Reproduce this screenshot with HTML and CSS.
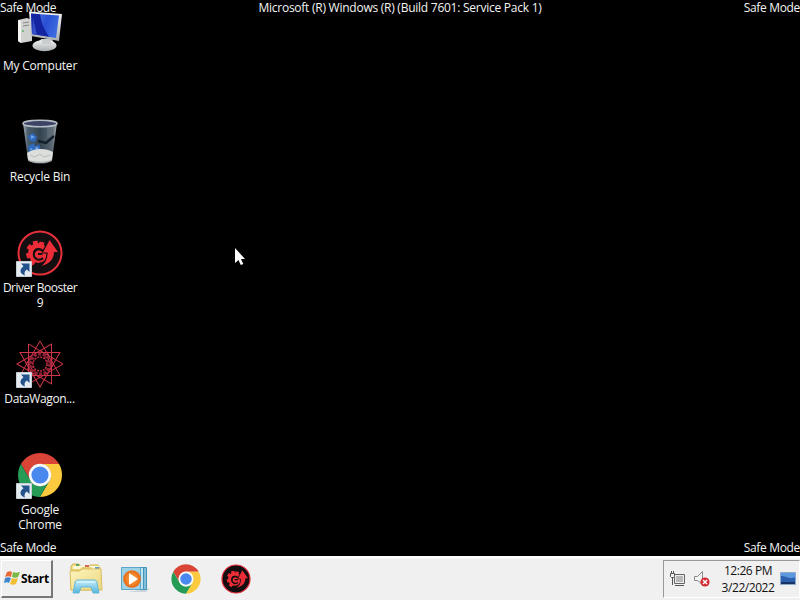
FILE: index.html
```html
<!DOCTYPE html>
<html lang="en">
<head>
<meta charset="utf-8">
<title>Desktop</title>
<link rel="stylesheet" href="styles.css">
</head>
<body>
<svg class="defs" width="0" height="0" aria-hidden="true">
  <defs>
    <linearGradient id="screen" x1="0" y1="0" x2="1" y2=".3"><stop offset="0" stop-color="#5f86ec"/><stop offset=".35" stop-color="#3c62dc"/><stop offset=".6" stop-color="#2a50d4"/><stop offset="1" stop-color="#3b6ae0"/></linearGradient>
    <linearGradient id="metal" x1="0" y1="0" x2="0" y2="1"><stop offset="0" stop-color="#f4f4f4"/><stop offset="1" stop-color="#a9aeb0"/></linearGradient>
    <linearGradient id="glass" x1="0" y1="0" x2="1" y2="0"><stop offset="0" stop-color="#a4b0b8"/><stop offset=".14" stop-color="#4b5c6b"/><stop offset=".5" stop-color="#33434f"/><stop offset=".86" stop-color="#5a6873"/><stop offset="1" stop-color="#a4adb3"/></linearGradient>
    <linearGradient id="folder" x1="0" y1="0" x2="1" y2="1"><stop offset="0" stop-color="#fdf5bf"/><stop offset="1" stop-color="#ecd57c"/></linearGradient>
    <linearGradient id="sky" x1="0" y1="0" x2="0" y2="1"><stop offset="0" stop-color="#c9effa"/><stop offset="1" stop-color="#54b5dd"/></linearGradient>
    <radialGradient id="orange"><stop offset="0" stop-color="#ffae4d"/><stop offset="1" stop-color="#e76813"/></radialGradient>
    <symbol id="chrome" viewBox="0 0 48 48">
      <path fill="#d94437" d="M4.950 13A22 22 0 0 1 43.050 13L24 13A11 11 0 0 0 14.470 29.500Z"/>
      <path fill="#fbca3e" transform="rotate(120 24 24)" d="M4.950 13A22 22 0 0 1 43.050 13L24 13A11 11 0 0 0 14.470 29.500Z"/>
      <path fill="#269b55" transform="rotate(240 24 24)" d="M4.950 13A22 22 0 0 1 43.050 13L24 13A11 11 0 0 0 14.470 29.500Z"/>
      <circle cx="24" cy="24" r="11.200" fill="#fafafa"/><circle cx="24" cy="24" r="8.600" fill="#4888ef"/>
    </symbol>
    <symbol id="booster" viewBox="0 0 48 48">
      <circle cx="22" cy="24" r="7.500" fill="none" stroke="#ec2d38" stroke-width="5"/>
      <g stroke="#ec2d38" stroke-width="5"><path d="M20 17l-1-5"/><path d="M16 20l-4-3"/><path d="M14.500 26l-4 1"/><path d="M18 31l-3 4"/><path d="M25 17l1-4"/></g>
      <path fill="#ec2d38" stroke="#130e0f" stroke-width="1.200" d="M33.500 10L43 23.500h-4.500c0 7-5 12.500-15.500 14.500 5-3 8-7 8-14h-5z"/>
      <circle cx="22.500" cy="25" r="4" fill="#ec2d38"/>
      <path fill="none" stroke="#130e0f" stroke-width="2" d="M27 22a5.300 5.300 0 1 0 0 7M22 25h4"/>
    </symbol>
    <symbol id="shortcut" viewBox="0 0 16 16">
      <path fill="#e4ebf0" stroke="#c5ced4" d="M.5.5h15v15H.5z"/>
      <path fill="#24528c" d="M5 2.500h8.500V11l-2.700-2.500C8.500 10 8 12 9 14.500 3.500 13 3 8.500 7.500 5.300z"/>
    </symbol>
    <g id="rosette"><path d="M24 0L44 34.500H4Z"/><path d="M24 9c7 4 7 9 0 14s-7 10 0 14"/></g>
  </defs>
</svg>

<main class="desktop">
  <span class="mark top-left">Safe Mode</span>
  <span class="mark build">Microsoft (R) Windows (R) (Build 7601: Service Pack 1)</span>
  <span class="mark top-right">Safe Mode</span>
  <span class="mark bottom-left">Safe Mode</span>
  <span class="mark bottom-right">Safe Mode</span>

  <div class="icons">
    <div class="item">
      <svg width="48" height="48" viewBox="0 0 48 48">
        <path fill="#d0d2d0" d="M2 12l9-2 5 2v21L5 35l-3-2z"/><path fill="#f4f4f1" d="M2 12l3 1v22l-3-2z"/><path stroke="#888" d="M7 15l6-1M7 18l6-1"/><circle cx="7" cy="23" r="1" fill="#55b66f"/>
        <path fill="#bfc4c4" d="M25 31h11l3 7H22z"/><ellipse cx="28.500" cy="37.500" rx="12" ry="5.700" fill="url(#metal)"/><path fill="#c8cdcf" d="M26 31h8l1 5h-9z"/>
        <path fill="url(#metal)" d="M13 3.500l33 2.500-3 27-28-5z"/><path fill="url(#screen)" d="M15 5.500l28 2-3 22.500-24-4z"/><path fill="#1424a1" d="M15 5.500l9 .7c1 8 4 15 9 22.600L16 26z"/><path fill="#3350c8" d="M17 10l4 17-5-1z"/>
      </svg>
      <span class="label computer">My Computer</span>
    </div>
    <div class="item">
      <svg width="48" height="48" viewBox="0 0 48 48">
        <path fill="url(#glass)" d="M7 4h34l-5 37c-2 5-21 5-24 0z"/>
        <path fill="#64737e" d="M31 8h6l-2 10-4 2z" opacity=".5"/>
        <path fill="#2f69bd" d="M12 17l5-3 4 4-2 5-5-1zM12 27l6-3 1 4 4-3 2 6-4 4-8-2z"/><path fill="#70a5e8" d="M15 16l4 2-4 2zM20 27l3 3-4 2zM14 29l3 1-2 2z"/><path fill="none" stroke="#14202c" stroke-width="2.500" d="M22 22l8 2 8-7"/>
        <path fill="#dcdedb" d="M11 34c7-5 19-5 26-1l-1 8c-3 4-21 4-24 0z"/><path fill="none" stroke="#b8bcba" d="M14 36l5 2 5-3 4 3 6-2"/><path fill="none" stroke="#9fa4a5" d="M12 41c4 3 20 3 24 0"/>
        <ellipse cx="24" cy="4.500" rx="17" ry="3.300" fill="#3c4366" stroke="#b5bec4" stroke-width="1.500"/>
      </svg>
      <span class="label">Recycle Bin</span>
    </div>
    <div class="item">
      <svg width="48" height="48" viewBox="0 0 48 48"><circle cx="24" cy="23" r="21.500" fill="#130e0f" stroke="#e8303a" stroke-width="2"/><use href="#booster" x="0" y="-1" width="48" height="48"/><use href="#shortcut" x="0" y="31" width="16" height="16"/></svg>
      <span class="label booster">Driver Booster</span>
      <span class="label second">9</span>
    </div>
    <div class="item">
      <svg width="48" height="48" viewBox="0 0 48 48">
        <g fill="none" stroke="#d0354a" stroke-width="1">
          <use href="#rosette"/><use href="#rosette" transform="rotate(30 24 23)"/><use href="#rosette" transform="rotate(60 24 23)"/><use href="#rosette" transform="rotate(90 24 23)"/>
        </g>
        <circle cx="24" cy="23" r="10" fill="none" stroke="#8f2035" stroke-width="3" stroke-dasharray="3 1.500"/>
        <circle cx="24" cy="23" r="7" fill="#080304" stroke="#b92b3f" stroke-width="1.500" stroke-dasharray="2 1"/>
        <use href="#shortcut" x="0" y="31" width="16" height="16"/>
      </svg>
      <span class="label wagon">DataWagon...</span>
    </div>
    <div class="item">
      <svg width="48" height="48" viewBox="0 0 48 48"><use href="#chrome" x="0" y="-1" width="48" height="48"/><use href="#shortcut" x="0" y="31" width="16" height="16"/></svg>
      <span class="label">Google</span>
      <span class="label second">Chrome</span>
    </div>
  </div>

  <svg class="cursor" width="12" height="19" viewBox="0 0 12 19"><path fill="#fff" d="M1 1v15l3.500-3 2.300 5 2.500-1-2.300-5H11z"/></svg>
</main>

<footer class="taskbar">
  <div class="start">
    <svg width="17" height="16" viewBox="0 0 17 16"><path fill="#e76a32" d="M3 2c2-1 4-1 5 0L7 7C5 6 3 6 1 7z"/><path fill="#79b843" d="M9 2c2 1 4 1 7 0l-2 5c-2 1-4 1-6 0z"/><path fill="#4385ca" d="M1 8c2-1 4-1 6 0l-2 5c-1-1-3-1-5 0z"/><path fill="#f3bf35" d="M8 8c2 1 4 1 6 0l-2 6c-2 1-4 1-6 0z"/></svg>
    <span>Start</span>
  </div>
  <div class="pins">
    <svg width="36" height="34" viewBox="0 0 36 34">
      <path fill="#efdc83" stroke="#d0b650" d="M3 4l2-2h6l2 3h8l1-2h8l2 3v22H3z"/><path fill="#fff8d8" d="M5 4h26v5H5z"/><path fill="#e9ce70" d="M4 7h8l2-2h9l2 3h8v3H4z"/><path fill="#59a36a" d="M8 2h3v2H8z"/><path fill="#cf695d" d="M17 3h4v2h-4z"/><path fill="#639dc8" d="M27 5h4v2h-4z"/>
      <path fill="url(#folder)" stroke="#d9bf61" d="M2 9h10l2-2h19l1 21H3z"/><path fill="url(#sky)" stroke="#65b8d7" d="M7 21c0-2 1-3 3-3h16c2 0 3 1 3 3l2 10h-6l-2-6H13l-2 6H5z"/><path stroke="#e6fbff" d="M9 20h18"/>
    </svg>
    <svg width="30" height="28" viewBox="0 0 30 28"><path fill="#b9c9cf" d="M20 25l9-2-4 4H6z" opacity=".7"/><path fill="#83bfd9" stroke="#4592b8" d="M8 2.500h17.500v22H8z"/><path fill="#c1e5f2" stroke="#4592b8" d="M5 2.500h17.500v22H5z"/><path fill="#9ed2e7" stroke="#5aa7cb" d="M.5 2.500h19v22H.5z"/><circle cx="11" cy="14" r="8.800" fill="url(#orange)"/><path fill="#fff" d="M8 8l9 6-9 6z"/></svg>
    <svg width="32" height="32" viewBox="0 0 48 48"><use href="#chrome" width="48" height="48"/></svg>
    <svg width="32" height="32" viewBox="0 0 48 48"><circle cx="24" cy="24" r="21" fill="#130e0f" stroke="#e82c3a" stroke-width="1.800"/><use href="#booster" width="48" height="48"/></svg>
  </div>
  <div class="tray">
    <svg width="18" height="18" viewBox="0 0 18 18"><path fill="#eee" stroke="#666" d="M5.500 4.500h10v9h-10z"/><path fill="#b8b8b8" d="M7 6h7v6H7z"/><path fill="#f0f0f0" stroke="#555" d="M1.500 3.500h4v3l-1 1h-2l-1-1z"/><path fill="none" stroke="#555" d="M2.500 1v2M4.500 1v2M3.500 7v8M6 15.500h9"/></svg>
    <svg class="sound" width="18" height="18" viewBox="0 0 18 18"><path fill="#f3f3f3" stroke="#888" d="M1.500 6.500h3l5-5v13l-5-4h-3z"/><circle cx="12" cy="12" r="4.600" fill="#d42d34"/><path stroke="#fff" stroke-width="1.500" d="M10 10l4 4m0-4l-4 4"/></svg>
    <div class="clock"><span>12:26 PM</span><span>3/22/2022</span></div>
    <svg width="17" height="14" viewBox="0 0 17 14"><path fill="#2c5fae" stroke="#8baac8" d="M.5.500h15v12H.5z"/><path fill="#5b9ade" d="M1 1h14v4C9 8 7 4 1 4z"/><path fill="#173264" d="M1 10h14v2H1z"/></svg>
  </div>
</footer>
</body>
</html>
```

FILE: styles.css
```css
* { box-sizing: border-box; }
body {
  margin: 0;
  width: 800px;
  height: 600px;
  display: flex;
  flex-direction: column;
  overflow: hidden;
  background: #000;
  font: 12px/15px "Open Sans", "Noto Sans", sans-serif;
}
svg { display: block; flex: none; }
.defs { position: absolute; }
.desktop { position: relative; height: 556px; color: #f4f4f4; }
.mark { position: absolute; z-index: 1; white-space: nowrap; letter-spacing: -.33px; }
.top-left { top: 0; left: 0; }
.top-right { top: 0; right: 0; }
.bottom-left { bottom: 1px; left: 0; }
.bottom-right { bottom: 1px; right: 0; }
.build { top: 0; left: 0; width: 100%; text-align: center; letter-spacing: -.25px; }
.icons { display: grid; grid-auto-rows: 111px; width: 80px; padding-top: 8px; }
.item { display: flex; flex-direction: column; align-items: center; }
.label { margin-top: 2px; text-align: center; white-space: nowrap; letter-spacing: -.2px; }
.second { margin-top: 0; }
.computer { letter-spacing: -.2px; }
.booster { letter-spacing: -.5px; }
.wagon { letter-spacing: -.35px; padding-right: 1px; }
.cursor { position: absolute; left: 234px; top: 247px; }
.taskbar {
  display: flex;
  align-items: center;
  height: 44px;
  background: #f0f0f0;
  border-top: 1px solid #fff;
  box-shadow: inset 0 2px #fafafa;
}
.start {
  display: flex;
  align-items: center;
  width: 52px;
  height: 38px;
  margin-left: 1px;
  padding-left: 2px;
  border: 1px solid #fff;
  border-right: 2px solid #777;
  border-bottom: 2px solid #777;
  color: #000;
  font-size: 12px;
  font-weight: 700;
  letter-spacing: -.4px;
}
.pins { display: flex; align-items: center; margin-left: 15px; }
.pins svg:nth-child(2) { margin-left: 17px; }
.pins svg:nth-child(3) { margin-left: 19px; }
.pins svg:nth-child(4) { margin-left: 18px; }
.tray {
  display: flex;
  align-items: center;
  width: 137px;
  height: 38px;
  margin-left: auto;
  padding-left: 5px;
  border: 1px solid #fff;
  border-left-color: #999;
  border-top-color: #999;
}
.sound { margin-left: 6px; }
.clock { display: flex; flex-direction: column; width: 64px; margin: 0 0 0 5px; text-align: center; line-height: 17px; letter-spacing: -.45px; color: #111; }
```
